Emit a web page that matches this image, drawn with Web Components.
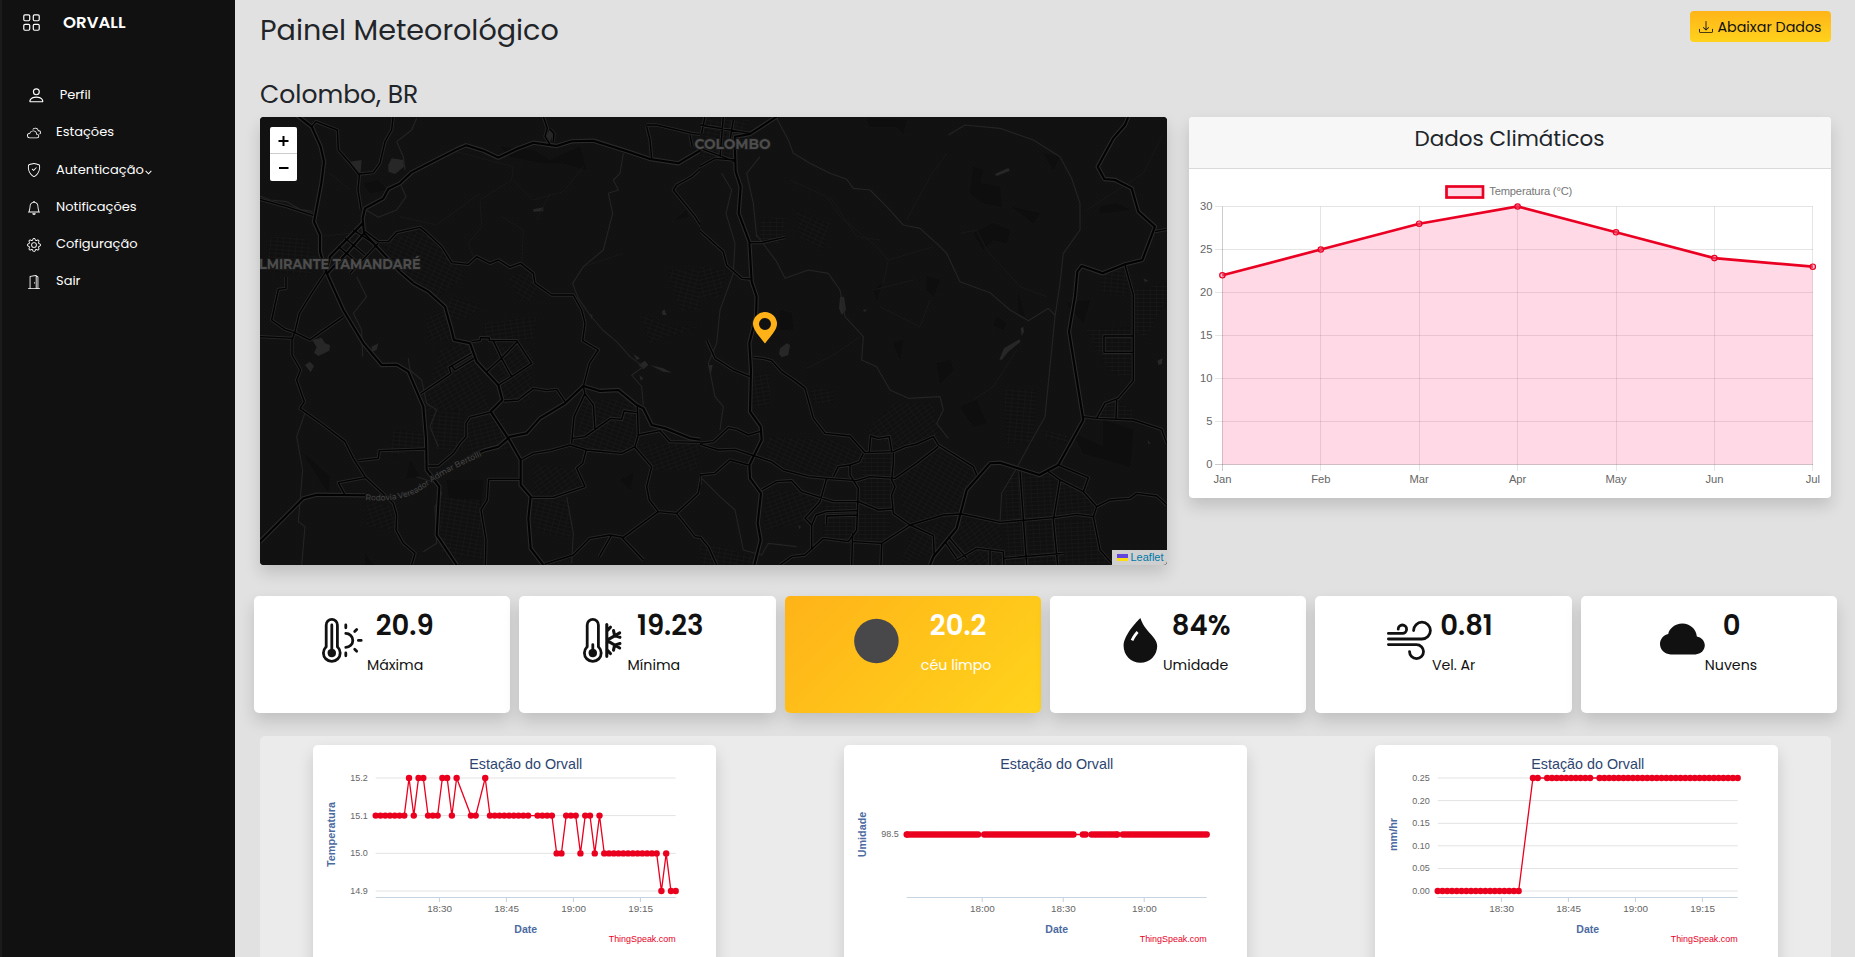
<!DOCTYPE html>
<html lang="pt-BR">
<head>
<meta charset="utf-8">
<title>Orvall</title>
<style>
html,body{margin:0;height:100%;overflow:hidden;background:#e1e1e1;font-family:Poppins,Inter,"Liberation Sans",sans-serif;color:#212529}
</style>
</head>
<body>
<orvall-app></orvall-app>
<script>
const ICONS={
grid:'<g fill="none" stroke="currentColor"><rect x="1.5" y="1.5" width="5" height="5" rx="1"/><rect x="9.5" y="1.5" width="5" height="5" rx="1"/><rect x="1.5" y="9.5" width="5" height="5" rx="1"/><rect x="9.5" y="9.5" width="5" height="5" rx="1"/></g>',
person:'<path d="M8 8a3 3 0 1 0 0-6 3 3 0 0 0 0 6Zm2-3a2 2 0 1 1-4 0 2 2 0 0 1 4 0Zm4 8c0 1-1 1-1 1H3s-1 0-1-1 1-4 6-4 6 3 6 4Zm-1-.004c-.001-.246-.154-.986-.832-1.664C11.516 10.68 10.289 10 8 10c-2.29 0-3.516.68-4.168 1.332-.678.678-.83 1.418-.832 1.664h10Z"/>',
clouds:'<path d="M16 7.5a2.5 2.5 0 0 1-1.456 2.272 3.513 3.513 0 0 0-.65-.824 1.5 1.5 0 0 0-.789-2.896.5.5 0 0 1-.627-.421 3 3 0 0 0-5.22-1.625 5.587 5.587 0 0 0-1.276.088 4.002 4.002 0 0 1 7.392.91A2.5 2.5 0 0 1 16 7.5z"/><path d="M7 5a4.5 4.5 0 0 1 4.473 4h.027a2.5 2.5 0 0 1 0 5H3a3 3 0 0 1-.247-5.99A4.502 4.502 0 0 1 7 5zm3.5 4.5a3.5 3.5 0 0 0-6.89-.873.5.5 0 0 1-.51.375A2 2 0 1 0 3 13h8.5a1.5 1.5 0 1 0-.376-2.953.5.5 0 0 1-.624-.492V9.5z"/>',
shield:'<path d="M5.338 1.59a61.44 61.44 0 0 0-2.837.856.481.481 0 0 0-.328.39c-.554 4.157.726 7.19 2.253 9.188a10.725 10.725 0 0 0 2.287 2.233c.346.244.652.42.893.533.12.057.218.095.293.118a.55.55 0 0 0 .101.025.615.615 0 0 0 .1-.025c.076-.023.174-.061.294-.118.24-.113.547-.29.893-.533a10.726 10.726 0 0 0 2.287-2.233c1.527-1.997 2.807-5.031 2.253-9.188a.48.48 0 0 0-.328-.39c-.651-.213-1.75-.56-2.837-.855C9.552 1.29 8.531 1.067 8 1.067c-.53 0-1.552.223-2.662.524zM5.072.56C6.157.265 7.31 0 8 0s1.843.265 2.928.56c1.11.3 2.229.655 2.887.87a1.54 1.54 0 0 1 1.044 1.262c.596 4.477-.787 7.795-2.465 9.99a11.775 11.775 0 0 1-2.517 2.453 7.159 7.159 0 0 1-1.048.625c-.28.132-.581.24-.829.24s-.548-.108-.829-.24a7.158 7.158 0 0 1-1.048-.625 11.777 11.777 0 0 1-2.517-2.453C1.928 10.487.545 7.169 1.141 2.692A1.54 1.54 0 0 1 2.185 1.43 62.456 62.456 0 0 1 5.072.56z"/><path d="M10.854 5.146a.5.5 0 0 1 0 .708l-3 3a.5.5 0 0 1-.708 0l-1.5-1.5a.5.5 0 1 1 .708-.708L7.5 7.793l2.646-2.647a.5.5 0 0 1 .708 0z"/>',
bell:'<path d="M8 16a2 2 0 0 0 2-2H6a2 2 0 0 0 2 2zM8 1.918l-.797.161A4.002 4.002 0 0 0 4 6c0 .628-.134 2.197-.459 3.742-.16.767-.376 1.566-.663 2.258h10.244c-.287-.692-.502-1.49-.663-2.258C12.134 8.197 12 6.628 12 6a4.002 4.002 0 0 0-3.203-3.92L8 1.917zM14.22 12c.223.447.481.801.78 1H1c.299-.199.557-.553.78-1C2.68 10.2 3 6.88 3 6c0-2.42 1.72-4.44 4.005-4.901a1 1 0 1 1 1.99 0A5.002 5.002 0 0 1 13 6c0 .88.32 4.2 1.22 6z"/>',
gear:'<path d="M8 4.754a3.246 3.246 0 1 0 0 6.492 3.246 3.246 0 0 0 0-6.492zM5.754 8a2.246 2.246 0 1 1 4.492 0 2.246 2.246 0 0 1-4.492 0z"/><path d="M9.796 1.343c-.527-1.79-3.065-1.79-3.592 0l-.094.319a.873.873 0 0 1-1.255.52l-.292-.16c-1.64-.892-3.433.902-2.54 2.541l.159.292a.873.873 0 0 1-.52 1.255l-.319.094c-1.79.527-1.79 3.065 0 3.592l.319.094a.873.873 0 0 1 .52 1.255l-.16.292c-.892 1.64.901 3.434 2.541 2.54l.292-.159a.873.873 0 0 1 1.255.52l.094.319c.527 1.79 3.065 1.79 3.592 0l.094-.319a.873.873 0 0 1 1.255-.52l.292.16c1.64.893 3.434-.902 2.54-2.541l-.159-.292a.873.873 0 0 1 .52-1.255l.319-.094c1.79-.527 1.79-3.065 0-3.592l-.319-.094a.873.873 0 0 1-.52-1.255l.16-.292c.893-1.64-.902-3.433-2.541-2.54l-.292.159a.873.873 0 0 1-1.255-.52l-.094-.319zm-2.633.283c.246-.835 1.428-.835 1.674 0l.094.319a1.873 1.873 0 0 0 2.693 1.115l.291-.16c.764-.415 1.6.42 1.184 1.185l-.159.292a1.873 1.873 0 0 0 1.116 2.692l.318.094c.835.246.835 1.428 0 1.674l-.319.094a1.873 1.873 0 0 0-1.115 2.693l.16.291c.415.764-.42 1.6-1.185 1.184l-.291-.159a1.873 1.873 0 0 0-2.693 1.116l-.094.318c-.246.835-1.428.835-1.674 0l-.094-.319a1.873 1.873 0 0 0-2.692-1.115l-.292.16c-.764.415-1.6-.42-1.184-1.185l.159-.291A1.873 1.873 0 0 0 1.945 8.93l-.319-.094c-.835-.246-.835-1.428 0-1.674l.319-.094A1.873 1.873 0 0 0 3.06 4.377l-.16-.292c-.415-.764.42-1.6 1.185-1.184l.292.159a1.873 1.873 0 0 0 2.692-1.115l.094-.319z"/>',
door:'<path d="M8.5 10c-.276 0-.5-.448-.5-1s.224-1 .5-1 .5.448.5 1-.224 1-.5 1z"/><path d="M10.828.122A.5.5 0 0 1 11 .5V1h.5A1.5 1.5 0 0 1 13 2.5V15h1.5a.5.5 0 0 1 0 1h-13a.5.5 0 0 1 0-1H3V1.5a.5.5 0 0 1 .43-.495l7-1a.5.5 0 0 1 .398.117zM11.5 2H11v13h1V2.5a.5.5 0 0 0-.5-.5zM4 1.934V15h6V1.077l-6 .857z"/>',
chevron:'<path d="M1.5 4.5 8 11l6.5-6.5" fill="none" stroke="currentColor" stroke-width="2.4"/>',
download:'<path d="M.5 9.9a.5.5 0 0 1 .5.5v2.5a1 1 0 0 0 1 1h12a1 1 0 0 0 1-1v-2.5a.5.5 0 0 1 1 0v2.5a2 2 0 0 1-2 2H2a2 2 0 0 1-2-2v-2.5a.5.5 0 0 1 .5-.5z"/><path d="M7.646 11.854a.5.5 0 0 0 .708 0l3-3a.5.5 0 0 0-.708-.708L8.5 10.293V1.5a.5.5 0 0 0-1 0v8.793L5.354 8.146a.5.5 0 1 0-.708.708l3 3z"/>',
sun:'<path d="M5 12.5a1.5 1.5 0 1 1-2-1.415V2.5a.5.5 0 0 1 1 0v8.585A1.5 1.5 0 0 1 5 12.5z"/><path d="M1 2.5a2.5 2.5 0 0 1 5 0v7.55a3.5 3.5 0 1 1-5 0V2.5zM3.5 1A1.5 1.5 0 0 0 2 2.5v7.987l-.167.15a2.5 2.5 0 1 0 3.333 0L5 10.486V2.5A1.5 1.5 0 0 0 3.5 1zm5 1a.5.5 0 0 1 .5.5v1a.5.5 0 0 1-1 0v-1a.5.5 0 0 1 .5-.5zm4.243 1.757a.5.5 0 0 1 0 .707l-.707.708a.5.5 0 1 1-.708-.708l.708-.707a.5.5 0 0 1 .707 0zM8 5.5a.5.5 0 0 1 .5-.5 3 3 0 1 1 0 6 .5.5 0 0 1 0-1 2 2 0 0 0 0-4 .5.5 0 0 1-.5-.5zM12.5 8a.5.5 0 0 1 .5-.5h1a.5.5 0 1 1 0 1h-1a.5.5 0 0 1-.5-.5zm-1.172 2.828a.5.5 0 0 1 .708 0l.707.708a.5.5 0 0 1-.707.707l-.708-.707a.5.5 0 0 1 0-.708zM8.5 12a.5.5 0 0 1 .5.5v1a.5.5 0 0 1-1 0v-1a.5.5 0 0 1 .5-.5z"/>',
snow:'<path d="M5 12.5a1.5 1.5 0 1 1-2-1.415V9.5a.5.5 0 0 1 1 0v1.585A1.5 1.5 0 0 1 5 12.5z"/><path d="M1 2.5a2.5 2.5 0 0 1 5 0v7.55a3.5 3.5 0 1 1-5 0V2.5zM3.5 1A1.5 1.5 0 0 0 2 2.5v7.987l-.167.15a2.5 2.5 0 1 0 3.333 0L5 10.486V2.5A1.5 1.5 0 0 0 3.5 1z"/><path d="M8.5 2.3v11.4M8.5 4.7l1.3-1.4M8.5 11.3l1.3 1.4M8.5 8l4.6-2.7M8.5 8l4.6 2.7M11.3 6.3l-.4-1.8M11.3 6.3l1.9.6M11.3 9.7l-.4 1.8M11.3 9.7l1.9-.6" fill="none" stroke="currentColor" stroke-width="1.1" stroke-linecap="round"/>',
disc:'<circle cx="8" cy="8.2" r="7.95" fill="#48484a"/>',
drop:'<path fill-rule="evenodd" d="M8 16a6 6 0 0 0 6-6c0-1.655-1.122-2.904-2.432-4.362C10.254 4.176 8.75 2.503 8 0c0 0-6 5.686-6 10a6 6 0 0 0 6 6ZM6.646 4.646l.708.708c-.29.29-1.128 1.311-1.907 2.87l-.894-.448c.82-1.641 1.717-2.753 2.093-3.13Z"/>',
wind:'<path d="M12.5 2A2.5 2.5 0 0 0 10 4.5a.5.5 0 0 1-1 0A3.5 3.5 0 1 1 12.5 8H.5a.5.5 0 0 1 0-1h12a2.5 2.5 0 0 0 0-5zm-7 1a1 1 0 0 0-1 1 .5.5 0 0 1-1 0 2 2 0 1 1 2 2h-5a.5.5 0 0 1 0-1h5a1 1 0 0 0 0-2zM0 9.5A.5.5 0 0 1 .5 9h10.042a3 3 0 1 1-3 3 .5.5 0 0 1 1 0 2 2 0 1 0 2-2H.5a.5.5 0 0 1-.5-.5z"/>',
cloud:'<path d="M4.406 3.342A5.53 5.53 0 0 1 8 2c2.69 0 4.923 2 5.166 4.579C14.758 6.804 16 8.137 16 9.773 16 11.569 14.502 13 12.687 13H3.781C1.708 13 0 11.366 0 9.318c0-1.763 1.266-3.223 2.942-3.593.143-.863.698-1.723 1.464-2.383z"/>'
};

class Base extends HTMLElement{
  connectedCallback(){ if(!this.shadowRoot){ this.attachShadow({mode:'open'}).innerHTML=this.render(); this.ready&&this.ready(); } }
  a(n,d=''){ return this.getAttribute(n)??d; }
}

/* Icon drawn on a 16-unit grid */
customElements.define('ui-icon',class extends Base{
  render(){const s=this.a('size','16');return `<style>:host{display:block;flex:none;width:${s}px;height:${s}px}svg{display:block;overflow:visible}</style><svg width="${s}" height="${s}" viewBox="0 0 16 16" fill="currentColor">${ICONS[this.a('name')]}</svg>`}
});

/* One line of text in a box of known measure; squeezed or stretched only when the font is well off it */
customElements.define('fit-text',class extends Base{
  render(){return `<style>:host{display:block;flex:none;width:${this.a('w')}px;white-space:nowrap}span{display:inline-block;transform-origin:0 50%}</style><span><slot></slot></span>`}
  ready(){const s=this.shadowRoot.querySelector('span');const n=s.getBoundingClientRect().width,k=this.a('w')/n;if(n&&Math.abs(k-1)>.035)s.style.transform=`scaleX(${k})`}
});

customElements.define('nav-item',class extends Base{
  render(){return `<style>:host{display:flex;align-items:center;height:37.25px;padding-left:27px;color:#fff;font-size:13px;line-height:20px}
  ui-icon.i{margin-top:1.500px;margin-right:${this.a('gap','15')}px}.c{margin:6px 0 0 1.500px}</style>
  <ui-icon class="i" name="${this.a('icon')}" size="${this.a('size','14')}"></ui-icon><fit-text w="${this.a('w')}">${this.a('label')}</fit-text>${this.hasAttribute('more')?'<ui-icon class="c" name="chevron" size="7"></ui-icon>':''}`}
});

customElements.define('side-bar',class extends Base{
  render(){return `<style>:host{display:flex;flex-direction:column;box-sizing:border-box;background:#111;border-left:2px solid #1b1b1b;color:#fff}
  .brand{display:flex;align-items:center;height:45px;padding-left:20px;margin-bottom:31.4px;font-size:15px;font-weight:600}
  .brand fit-text{margin-left:21.5px}nav{margin-left:-2px}</style>
  <div class="brand"><ui-icon name="grid" size="19"></ui-icon><fit-text w="62.5">ORVALL</fit-text></div><nav><slot></slot></nav>`}
});

customElements.define('page-header',class extends Base{
  render(){return `<style>:host{display:flex;justify-content:space-between;align-items:flex-start;height:69px;padding-top:11px}
  h1{margin:1.500px 0 0;font:400 28.600px/34px Poppins,Inter,sans-serif}
  button{box-sizing:border-box;display:flex;align-items:center;gap:3.500px;width:141px;height:31px;padding:0 9px;border:0;border-radius:4px;background:linear-gradient(#ffb519,#ffd21c);color:#111;font:400 14.300px/31px Poppins,Inter,sans-serif}
  ui-icon{margin-top:1px}fit-text{margin-top:1px}h1 fit-text{margin-top:0}</style>
  <h1><fit-text w="301">Painel Meteorológico</fit-text></h1><button><ui-icon name="download" size="14"></ui-icon><fit-text w="106">Abaixar Dados</fit-text></button>`}
});

/* Road geometry: L is the western half, R the eastern half; three units per pixel */
const MAJOR_L=[
'M140 15 185 50 212 110 222 155 214 220 192 335 210 375 210 425 228 485 280 600 340 700 395 765 440 764 475 785 520 890 528 985 530 1080 568 1130 560 1275 620 1365',
'M338 325 345 295 400 265 415 237 450 220 485 187 620 118 648 106 700 122 745 143 800 117 850 98 920 108 965 94 1030 92 1135 125 1200 147 1285 160 1345 125 1420 75',
'M338 325 342 370 450 485 490 520 535 545 585 590 602 650 612 690 660 700 680 755 745 825 757 870 722 905 775 985 812 1050 812 1125 842 1160 835 1225 842 1315 880 1365',
'M30 1295 160 1165 200 1154 345 1156M640 1055 700 1022 745 1010 780 980 830 970 870 925 945 880 1000 828 1050 843 1105 840 1160 885 1180 895 1205 945 1245 955 1320 985 1390 995 1430 960',
'M338 340 240 440 228 485M342 370 290 430 232 490'];
const MID_L=[
'M430 15 425 60 405 95 390 160 370 188 328 192M185 50 198 35 262 60 265 120 300 160 328 195 324 240 334 300',
'M30 268 110 290 190 316','M345 365 385 395 415 395 440 368 510 352 530 368 575 410 605 458 655 463 680 440 720 460 745 450 780 472 812 460 850 490 855 520 905 555 970 555 995 600 1005 640 998 692 1045 720 1018 760 1000 830 1005 850 972 920 965 1000',
'M228 485 185 550 148 610 135 665 126 690 126 735 152 780 140 810 163 875 150 895 220 945 285 995 310 1045 345 1100 430 1180 440 1215 438 1260 460 1300 495 1330 485 1365','M30 680 130 685M280 620 215 665 180 690 135 668 105 658 65 630 85 538 108 535V500',
'M345 1103 265 1118 285 1155M325 1052 385 1045 388 1022 525 1017M535 1068H565L610 1030 630 1000 648 980V940L660 922 720 907',
'M512 852 603 790 597 772 665 732M603 765 615 780 672 745M665 695 690 692 692 683 718 684V692H800L845 760 785 800 745 825M730 692 755 745 785 800M800 697 755 745 710 785',
'M762 873 805 870 850 835 890 842 920 838 945 875M812 1050 850 1030 900 1022 960 1005 1010 1020 1115 1030 1155 1010 1165 975 1162 890M968 985 1005 980 1082 925 1115 928 1122 903 1160 908M1003 850 1030 885 1035 960M1165 975 1230 962 1260 995 1380 998M1008 1022 998 1060 980 1075 1005 1130 910 1162 842 1162M812 1108H716L712 1170 693 1200 708 1290 706 1365',
'M1155 1012 1205 1070 1190 1130 1198 1170 1225 1205 1280 1210 1335 1280 1370 1285 1400 1365M1225 1205 1120 1282 1080 1275 1020 1285 970 1335 885 1362M1280 1210 1345 1150 1355 1095 1420 1085M1085 1275 1048 1340M1115 1282 1180 1350',
'M880 20 892 55 885 80 900 103M900 58 912 70 910 95M1190 50 1200 90 1205 145M1190 45 1220 45 1325 70 1420 82M1410 410 1370 375 1335 320 1270 240 1280 225 1325 200 1375 155 1430 145M1320 75 1327 110M1365 20 1358 75 1375 125M265 410 320 455M285 385 345 435M310 360 372 400M300 490 385 400'];
const MAJOR_R=['M105 120 107 185 122 230 116 310 148 395 155 515 170 560 168 620 148 700 153 780 150 905 182 950 185 990 148 1065 150 1105 183 1150 173 1240 182 1290 163 1365',
'M1285 20 1275 45 1240 85 1193 170 1213 207 1245 210 1295 235 1315 305 1365 350 1327 450 1275 463 1208 490 1145 468 1132 485 1125 560 1107 665 1150 930 1075 1065 1018 1095 900 1058 870 1060 800 1140 770 1255 700 1340 690 1365','M105 140V80L150 72 230 20'];
const MID_R=['M-20 345 20 380 70 425 80 465 125 505 152 507M150 398 185 398 255 382M20 690 45 745 100 780 150 800M160 742 190 745 215 752 245 785 285 812 315 835 340 925 375 970 450 978 495 1028 580 1025 615 1010 650 1002 700 980 715 1005 820 1070 830 1095',
'M0 1000 40 995 85 953 110 958 145 975 180 965M0 1003 55 1020 105 1018 155 1035 215 1055 250 1080 325 1100 380 1105 470 1112 510 1100 585 1105 650 1060 715 1010',
'M0 1125V1095L45 1090 90 1050 145 1065M185 1140 230 1115 275 1112 305 1145 400 1175 475 1175 535 1200 578 1197M580 1028 580 1060 575 1110 585 1130 575 1155 580 1210 630 1245 700 1277 703 1340M630 1245 730 1215 785 1212 900 1237 1060 1223 1130 1213 1182 1220',
'M508 1025 512 978 535 985 568 980 575 1025M490 1030 478 1055 450 1065 450 1095 475 1135 470 1260 445 1295 370 1285 315 1335 275 1340 240 1365M450 1065 415 1070 400 1100M380 1105 360 1175 315 1225 335 1245 348 1215 380 1205 470 1202M335 1245 335 1320M380 1243V1218L470 1215M460 1295 545 1300 630 1245M545 1300 543 1365M458 1270 455 1365',
'M960 1085 980 1365M1045 1085 1080 1110 1060 1230 1073 1365M1080 1110 1150 1145 1190 1190 1180 1220 1200 1320 1240 1365M1075 1065 1165 1103 1150 1145M1190 1190 1230 1170 1290 1165 1310 1150 1370 1158 1400 1185',
'M1150 920 1190 925 1300 930 1385 958 1400 1000M1190 925 1215 880 1255 865 1300 812 1300 555 1275 465M1250 870 1248 925M1298 678H1212V727H1298M1365 365 1400 358M745 1280 800 1345M735 1295 770 1345M770 1350 830 1315 910 1325 912 1365M870 1318V1365M912 1345 1090 1330M0 1280 25 1310 50 1365M0 45 150 70M15 20 5 70M70 20 60 140M100 30 90 90M0 115 105 155M0 170 45 145 105 150'];
const MINOR_L=['M500 25 485 60 440 95 460 140 465 180M450 220 468 260 440 300 385 322 348 300M30 258 60 270 110 275 150 298 188 305M1120 130 1110 190 1090 210 1105 240 1075 250 1088 310 1060 420 1000 470 968 520 985 565 1020 615 1058 660 1100 695 1140 740 1180 770 1145 795 1175 830 1180 885','M320 500 350 560 310 610 335 660 338 740M475 745 480 780 515 810 530 880 560 900 540 950 565 1010M168 900 140 980 158 1080 145 1235 165 1250 155 1365','M950 1160 970 1270 965 1360M1380 690 1400 760 1375 800 1410 870M500 1100 560 1120 575 1150 555 1190 560 1300 520 1325'];
const FAINT_L='M220 378 300 370M600 120 790 170 785 210 690 270 695 350 655 400 670 440M790 210 850 270 940 245 1000 170M755 320 820 360 815 470M1000 470 1120 430M450 320 560 345 690 250M240 190 300 240M860 330 900 250';
const MINOR_R=['M230 25 265 90 280 130 330 160 390 190 440 208 460 235 510 240 560 290 610 345 660 355 710 400 740 430 780 515 870 548 930 600 985 632 1045 595 1065 615','M745 75 795 45 900 55 1000 90 1080 140 1115 205 1140 280 1140 360 1090 430 1080 520 1065 620 1035 920 990 1000 955 1065 905 1150 900 1235','M170 375 230 455 255 505 325 480 385 490 420 540 435 620 490 680 485 750 530 770 570 840 625 865 720 860 730 900 710 940 745 985','M180 140 140 190 160 280 170 380M65 190 95 240 78 310 105 400 100 490 60 600 50 700 25 760 45 860 70 890 60 960','M0 1100 60 1160 105 1200 130 1320 185 1335 205 1300 290 1310'];
const FAINT_R='M270 210 380 260 420 320 530 410 565 450 550 520M640 510 520 540M690 570 660 650 540 590M780 370 830 360 860 420 960 530 1040 560M390 260 470 380 540 390M820 870 880 830 950 720M320 775 400 735 480 680M620 330 690 200 740 130M1160 300 1330 190 1390 70M565 450 700 410';
/* street grids: half, polygon, rotation */
const BLOCKS=[
['L','400 390 520 360 650 500 560 560 430 470',25],['L','60 380 160 380 200 440 180 500 50 480',5],['L','600 560 700 590 640 630 590 620',20],['L','530 620 590 600 600 690 530 690',-25],['L','570 720 660 690 720 900 520 900',-30],['L','700 640 860 620 850 690 700 690',-8],['L','730 700 850 720 840 880 760 870',-35],['L','770 500 850 480 860 560 820 580',30],['L','1250 480 1400 480 1380 600 1290 600',15],['L','1170 610 1260 650 1350 650 1200 700',20],['L','990 870 1160 870 1150 1030 980 1020',20],['L','540 910 640 900 640 1020 550 1020',5],['L','650 940 760 920 780 1020 650 1030',-15],['L','430 960 520 970 520 1020 420 1040',5],['L','850 1060 990 1080 980 1150 850 1150',-35],['L','350 1170 430 1190 440 1260 350 1250',-20],['L','570 1160 690 1170 700 1350 570 1330',10],['L','850 1170 960 1170 960 1290 850 1260',15],['L','1170 1000 1350 1000 1340 1080 1210 1080',-20],
['R','180 330 260 320 240 400 180 390',0],['R','290 300 390 340 370 420 300 380',25],['R','200 980 400 990 490 1030 370 1100 200 1050',25],['R','580 880 700 880 720 980 580 1010 500 960',-35],['R','480 1040 580 1040 570 1200 490 1200',0],['R','590 1110 720 1020 830 1090 770 1210 620 1240',30],['R','920 1100 1060 1090 1060 1220 910 1230',-3],['R','1080 1110 1170 1130 1180 1210 1070 1220',-5],['R','910 1240 1180 1230 1220 1360 920 1360',-3],['R','640 1260 770 1220 700 1330 600 1365',30],['R','780 1230 900 1240 910 1365 770 1365',-35],['R','910 840 1010 840 1000 1000 920 1000',5],['R','1200 480 1290 480 1280 560 1200 550',5],['R','1305 540 1400 520 1400 570 1340 680 1305 670',0],['R','1160 660 1295 650 1290 800 1230 790',0],['R','1195 900 1240 870 1300 900 1300 925 1200 925',0],['R','1030 960 1110 975 1100 1000 1030 985',15],['R','160 790 210 790 210 890 160 890',-10],['R','200 1140 360 1150 310 1240 190 1260',-20],['R','370 1180 460 1180 460 1290 370 1280',0],['R','470 1210 570 1210 570 1290 470 1290',0],['R','0 470 80 480 60 560 0 560',-15],['R','0 1290 160 1340 150 1365 0 1365',10],['R','20 30 150 30 100 150 0 140',12],['R','330 830 400 840 400 880 340 880',-10]];
const WOODS_L='M750 110 850 120 900 150 990 110 1010 180 940 160 880 160 780 140ZM340 220 385 210 410 240 360 250ZM480 1050 510 1100 470 1105ZM1110 1110 1150 1090 1140 1140ZM160 1030 240 1100 235 1145 215 1120ZM345 1330 370 1365H345ZM1275 330 1310 300 1315 320ZM590 1110 700 1110 690 1200 600 1180Z';
const WOODS_R='M500 25 620 30 610 70 590 50 510 50ZM820 170 850 180 840 220 900 230 905 290 850 280 810 250ZM880 340 930 360 920 400 880 390 850 420 820 370ZM935 290 1020 310 1000 340ZM680 500 720 510 700 560 680 540ZM520 540 545 520 530 570ZM1030 130 1080 140 1060 180ZM1200 290 1250 280 1290 300 1200 310ZM710 760 750 750 760 780 720 820ZM780 890 830 870 860 940 820 950ZM240 600 275 610 280 660 240 660ZM1100 580 1170 570 1150 640ZM580 700 610 690 600 750ZM1210 930 1300 960 1290 1070 1150 1030 1120 970 1210 1010ZM955 550 975 620 955 610ZM890 620 920 640 910 660 880 645ZM270 1040 320 1005 330 1020 290 1060Z';
const WATER_L='M300 155 335 150 332 185 318 188ZM415 165 425 145 460 150 462 170 435 192 415 185ZM187 690 215 683 225 700 240 705 238 722 205 738 192 728 200 712ZM165 765 180 755 192 768 182 787ZM850 298 880 292 880 304 850 305ZM1235 605 1243 597 1250 615 1238 615ZM1165 765 1185 752 1195 765 1180 778ZM1150 732 1170 745 1160 750ZM1200 765 1240 775 1265 788 1240 785ZM888 75 900 60 908 75 900 95ZM365 710 385 700 380 720 365 725ZM1168 795 1180 805 1172 812ZM1018 612 1028 615 1025 628Z';
const WATER_R='M885 192 925 174 930 182 890 198ZM420 560 432 560 438 600 425 615 417 595ZM240 715 260 700 270 705 265 735 245 742 237 732ZM898 748 912 715 958 688 962 695 925 725 905 750ZM962 655 970 650 972 665 965 678ZM25 765 38 765 32 795ZM1372 752 1388 745 1385 762 1375 765ZM488 600 500 598 495 606ZM1342 990 1352 1000 1346 1003ZM1330 505 1345 512 1335 516ZM295 1245 303 1250 298 1258Z';

customElements.define('map-panel',class extends Base{
  render(){
    const T={L:'translate(-10 -7) scale(.33333)',R:'translate(440 -7) scale(.33333)'};
    const p=(a,w,c)=>`<path d="${[].concat(a).join('')}" stroke="${c}" stroke-width="${w}"/>`;
    const pats=BLOCKS.map((b,i)=>`<pattern id="b${i}" width="19" height="12" patternUnits="userSpaceOnUse" patternTransform="rotate(${b[2]})"><path d="M0 1H19M1 0V12" stroke="#191919" stroke-width="2"/></pattern>`).join('');
    const half=k=>{const [ma,mi,mn,fa,wo,wa]=k=='L'?[MAJOR_L,MID_L,MINOR_L,FAINT_L,WOODS_L,WATER_L]:[MAJOR_R,MID_R,MINOR_R,FAINT_R,WOODS_R,WATER_R];
      return `<g transform="${T[k]}" clip-path="url(#c${k})" fill="none" stroke-linejoin="round"><path d="${wo}" fill="#0e0e0e"/>${BLOCKS.map((b,i)=>b[0]==k?`<polygon points="${b[1]}" fill="#101010"/><polygon points="${b[1]}" fill="url(#b${i})"/>`:'').join('')}<path d="${wa}" fill="#272727"/>${p(fa,2.6,'#191919')}${p(mn,3.4,'#242424')}${p(mi,10,'#262626')}${p(ma,13,'#292929')}${p(mi,4.2,'#020202')}${p(ma,6.2,'#020202')}</g>`};
    return `<style>:host{display:block;position:relative;border-radius:4px;box-shadow:0 8px 16px rgba(0,0,0,.15)}
    .m{display:block;border-radius:4px;overflow:hidden;background:#111}
    .zoom{position:absolute;left:10px;top:10px;width:27px;border-radius:2px;background:#fff;overflow:hidden}
    .zoom svg{display:block}
    .pin{position:absolute;left:493px;top:195px}
    .att{position:absolute;right:0;bottom:0;box-sizing:border-box;width:55px;height:15px;padding-left:5px;display:flex;align-items:center;gap:2.500px;background:#cfcfcf;border-bottom-right-radius:4px;color:#0078a8;font:11px/15px "Liberation Sans",sans-serif}</style>
    <svg class="m" width="907" height="448"><defs>${pats}<clipPath id="cL"><path d="M0 0H1350V1400H0Z"/></clipPath><clipPath id="cR"><path d="M0 0H1500V1400H0Z"/></clipPath><pattern id="dots" width="4" height="4" patternUnits="userSpaceOnUse"><path d="M0 0h1v1h-1zM2 2h1v1h-1z" fill="#151515"/></pattern></defs>
    <rect width="907" height="448" fill="#111"/><rect width="907" height="448" fill="url(#dots)"/>${half('L')}${half('R')}
    <g font-family="Montserrat,Inter,sans-serif" font-weight="700" font-size="14.4" fill="#4d4d4d" stroke="#1a1a1a" stroke-width="2" paint-order="stroke"><text x="434.5" y="31.7" textLength="76" lengthAdjust="spacingAndGlyphs">COLOMBO</text><text x="-1" y="152.3" textLength="161.5" lengthAdjust="spacingAndGlyphs">LMIRANTE TAMANDARÉ</text></g>
    <path id="rd" d="M105 383Q145 386 164 371T224 338" fill="none"/><text font-family="Montserrat,Inter,sans-serif" font-size="8.2" font-weight="500" fill="#444" stroke="#151515" stroke-width="1.500" paint-order="stroke"><textPath href="#rd" textLength="128" lengthAdjust="spacingAndGlyphs">Rodovia Vereador Admar Bertolli</textPath></text></svg>
    <div class="zoom"><svg width="27" height="54"><path d="M0 26.5H27" stroke="#ccc"/><path d="M8.5 14H18.500M13.5 9V19M9 41H18.500" stroke="#000" stroke-width="2"/></svg></div>
    <svg class="pin" width="24" height="32" viewBox="0 0 24 32"><path fill="#ffb218" fill-rule="evenodd" d="M12 0a12 12 0 0 1 12 12c0 6-7 13-12 19.500C7 25 0 18 0 12A12 12 0 0 1 12 0Zm0 6a6 6 0 1 0 0 12 6 6 0 0 0 0-12Z"/></svg>
    <div class="att"><svg width="11" height="8"><path fill="#6246dd" d="M0 0h11v4H0z"/><path fill="#ffdd14" d="M0 4h11v3H0z"/></svg><fit-text w="33">Leaflet</fit-text></div>`}
});

customElements.define('climate-card',class extends Base{
  render(){
    const v=[22,25,28,30,27,24,23],x=i=>33.4+i*98.4,y=n=>295.5-n*8.6;
    const line=v.map((n,i)=>`${x(i)} ${y(n)}`).join(' ');
    let g='',t='';
    for(let i=0;i<7;i++){const X=Math.round(x(i)-.5)+.5;g+=`<path d="M${X} 37.5V302" stroke="rgba(0,0,0,${i?.1:.2})"/>`;t+=`<text x="${x(i)}" y="314" text-anchor="middle">${['Jan','Feb','Mar','Apr','May','Jun','Jul'][i]}</text>`;
      const Y=Math.round(y(i*5)-.5)+.5;g+=`<path d="M26 ${Y}H624" stroke="rgba(0,0,0,${i?.1:.2})"/>`;t+=`<text x="23.500" y="${y(i*5)+3}" text-anchor="end">${i*5}</text>`}
    return `<style>:host{display:block;align-self:start;height:381px;border-radius:4px;background:#fff;box-shadow:0 8px 16px rgba(0,0,0,.15)}
    header{display:flex;justify-content:center;box-sizing:border-box;height:52px;padding-top:6px;border-bottom:1px solid #dadada;border-radius:4px 4px 0 0;background:#f7f7f7;font-size:21.500px;line-height:32px}
    svg{display:block}text{font:11.2px "Liberation Sans",sans-serif;fill:#666}</style>
    <header><fit-text w="191">Dados Climáticos</fit-text></header>
    <svg width="642" height="329">${g}<polygon points="33.4 295.5 ${line} 623.8 295.5" fill="rgba(255,64,129,.2)"/><polyline points="${line}" fill="none" stroke="#ea0022" stroke-width="2.700"/>
    ${v.map((n,i)=>`<circle cx="${x(i)}" cy="${y(n)}" r="2.700" fill="#ff6b95" fill-opacity=".4" stroke="#ea0022" stroke-width="1.200"/>`).join('')}
    <rect x="257.5" y="17.500" width="36.500" height="11" fill="#ffd9e5" stroke="#ea0022" stroke-width="2.700"/><text x="300.300" y="26" textLength="83" style="fill:#777">Temperatura (°C)</text>${t}</svg>`}
});

customElements.define('stat-card',class extends Base{
  render(){return `<style>:host{display:flex;box-sizing:border-box;height:117px;border-radius:5px;background:#fff;box-shadow:0 8px 16px rgba(0,0,0,.15);padding:22px 0 0 ${this.a('pl')}px;color:#111;line-height:20px}
  :host([gold]){background:linear-gradient(135deg,#ffb318,#ffd31c);color:#fff}
  .b{margin-top:-4.700px}.v{font-size:27.500px;font-weight:600;line-height:26px;margin-left:${this.a('vx')}px}.l{font-size:14.200px;margin:15.700px 0 0 ${this.a('lx','0.2')}px}</style>
  <ui-icon name="${this.a('icon')}" size="44.8"></ui-icon><div class="b"><fit-text class="v" w="${this.a('vw')}">${this.a('value')}</fit-text><fit-text class="l" w="${this.a('lw')}"><slot></slot></fit-text></div>`}
});

const seq=(...r)=>r.flatMap(([a,b,v])=>Array.from({length:Math.round(b-a)+1},(_,i)=>[a+i,v]));
const CHARTS={
temp:{n:63,ticks:[['18:30',63.7],['18:45',130.7],['19:00',197.700],['19:15',264.7]],ys:[['15.2',33],['15.1',70.6],['15.0',108.400],['14.9',146]],title:'Temperatura',tl:65,
 pts:seq([0,6,70.6],[7,7,33],[8,8,70.6],[9,10,33],[11,13,70.6],[14,15,33],[16,16,70.6],[17,17,33],[20,21,70.6],[23,23,33],[24,32,70.6],[34,37,70.6],[38,39,108.4],[40,42,70.6],[43,43,108.4],[44,45,70.6],[46,46,108.4],[47,47,70.6],[48,59,108.4],[60,60,146],[61,61,108.4],[62,63,146])},
hum:{n:111,ticks:[['18:00',75.500],['18:30',156.5],['19:00',237.5]],ys:[['98.5',89.5]],nogrid:1,title:'Umidade',tl:45.5,
 pts:seq([0,0,89.5],[.4,26.4,89.5],[28.7,61.7,89.5],[65.2,66.2,89.5],[68.4,77.4,89.5],[77.9,77.9,89.5],[80,111,89.5])},
rain:{n:63,ticks:[['18:30',63.7],['18:45',130.7],['19:00',197.7],['19:15',264.7]],ys:[['0.25',33],['0.20',55.600],['0.15',78.3],['0.10',100.8],['0.05',123.500],['0.00',146]],title:'mm/hr',tl:33,
 pts:seq([0,17,146],[20,21,33],[23,32,33],[34,63,33])}};
customElements.define('channel-chart',class extends Base{
  render(){const c=CHARTS[this.a('type')],x0=62.700,x=i=>x0+i*300/c.n;
    return `<style>:host{display:block;height:260px;border-radius:5px;background:#fff;box-shadow:0 8px 16px rgba(0,0,0,.15)}
    svg{display:block;font-family:"Liberation Sans",sans-serif}.k{font-size:8.4px;fill:#666}.b{font-size:10.500px;font-weight:700;fill:#4d6b9f}</style>
    <svg width="403" height="212">
    ${c.nogrid?'':c.ys.map(y=>`<path d="M${x0} ${y[1]}h300" stroke="#e3e3e3"/>`).join('')}
    ${c.ys.map(y=>`<text class="k" x="37.3" y="${y[1]+2.9}" textLength="17.5" lengthAdjust="spacingAndGlyphs">${y[0]}</text>`).join('')}
    <path d="M${x0} 152.500h300" stroke="#c7d5e3"/>
    ${c.ticks.map(t=>`<path d="M${t[1]+x0} 152v5" stroke="#c0d0e0"/><text class="k" x="${t[1]+x0-12.1}" y="167" textLength="24.8" lengthAdjust="spacingAndGlyphs">${t[0]}</text>`).join('')}
    <text x="156.300" y="24" font-size="14.3" fill="#2c4570" textLength="113" lengthAdjust="spacingAndGlyphs">Estação do Orvall</text>
    <text class="b" x="201.300" y="187.5" textLength="22.800" lengthAdjust="spacingAndGlyphs">Date</text>
    <text class="b" transform="translate(22.300 ${89.500+c.tl/2}) rotate(-90)" textLength="${c.tl}" lengthAdjust="spacingAndGlyphs">${c.title}</text>
    <text x="295.700" y="197" font-size="9" fill="#e8001f" textLength="67" lengthAdjust="spacingAndGlyphs">ThingSpeak.com</text>
    <polyline points="${c.pts.map(p=>x(p[0])+' '+p[1]).join(' ')}" fill="none" stroke="#ea001e" stroke-width="1.300"/>
    ${c.pts.map(p=>`<circle cx="${x(p[0])}" cy="${p[1]}" r="3.200" fill="#ea001e"/>`).join('')}</svg>`}
});

customElements.define('orvall-app',class extends Base{
  render(){return `<style>:host{display:grid;grid-template-columns:235px 1fr;height:957px;overflow:hidden}
  main{display:flex;flex-direction:column;padding:0 24px 0 25px;min-width:0}
  h2{margin:1px 0 8px;font-size:25px;font-weight:400;line-height:28px}
  .top{display:grid;grid-template-columns:907px 642px;justify-content:space-between;height:448px;flex:none}
  .stats{display:grid;grid-template-columns:repeat(6,1fr);gap:9px;margin:31px -6.3px 23px;flex:none}
  .charts{display:grid;grid-template-columns:repeat(3,403px);gap:128px;padding:9px 53px 0;border-radius:5px 5px 0 0;background:#ebebeb;height:221px;box-sizing:border-box;flex:none;overflow:hidden}</style>
  <side-bar>
    <nav-item icon="person" size="18.700" gap="14" label="Perfil" w="31.5"></nav-item>
    <nav-item icon="clouds" label="Estações" w="58"></nav-item>
    <nav-item icon="shield" label="Autenticação" w="87.5" more></nav-item>
    <nav-item icon="bell" label="Notificações" w="81"></nav-item>
    <nav-item icon="gear" label="Cofiguração" w="81.500"></nav-item>
    <nav-item icon="door" label="Sair" w="24.500"></nav-item>
  </side-bar>
  <main>
    <page-header></page-header>
    <h2><fit-text w="160">Colombo, BR</fit-text></h2>
    <div class="top"><map-panel></map-panel><climate-card></climate-card></div>
    <div class="stats">
      <stat-card icon="sun" pl="68.3" value="20.9" vw="57" vx="9" lw="57">Máxima</stat-card>
      <stat-card icon="snow" pl="63.500" value="19.23" vw="66" vx="9.500" lw="53">Mínima</stat-card>
      <stat-card gold icon="disc" pl="69" value="20.2" vw="56" vx="31.500" lw="71.500" lx="22.500">céu limpo</stat-card>
      <stat-card icon="drop" pl="68" value="84%" vw="57.500" vx="9" lw="67">Umidade</stat-card>
      <stat-card icon="wind" pl="71.500" value="0.81" vw="51.500" vx="8.500" lw="44">Vel. Ar</stat-card>
      <stat-card icon="cloud" pl="79" value="0" vw="18" vx="18" lw="53">Nuvens</stat-card>
    </div>
    <div class="charts"><channel-chart type="temp"></channel-chart><channel-chart type="hum"></channel-chart><channel-chart type="rain"></channel-chart></div>
  </main>`}
});
</script>
</body>
</html>
